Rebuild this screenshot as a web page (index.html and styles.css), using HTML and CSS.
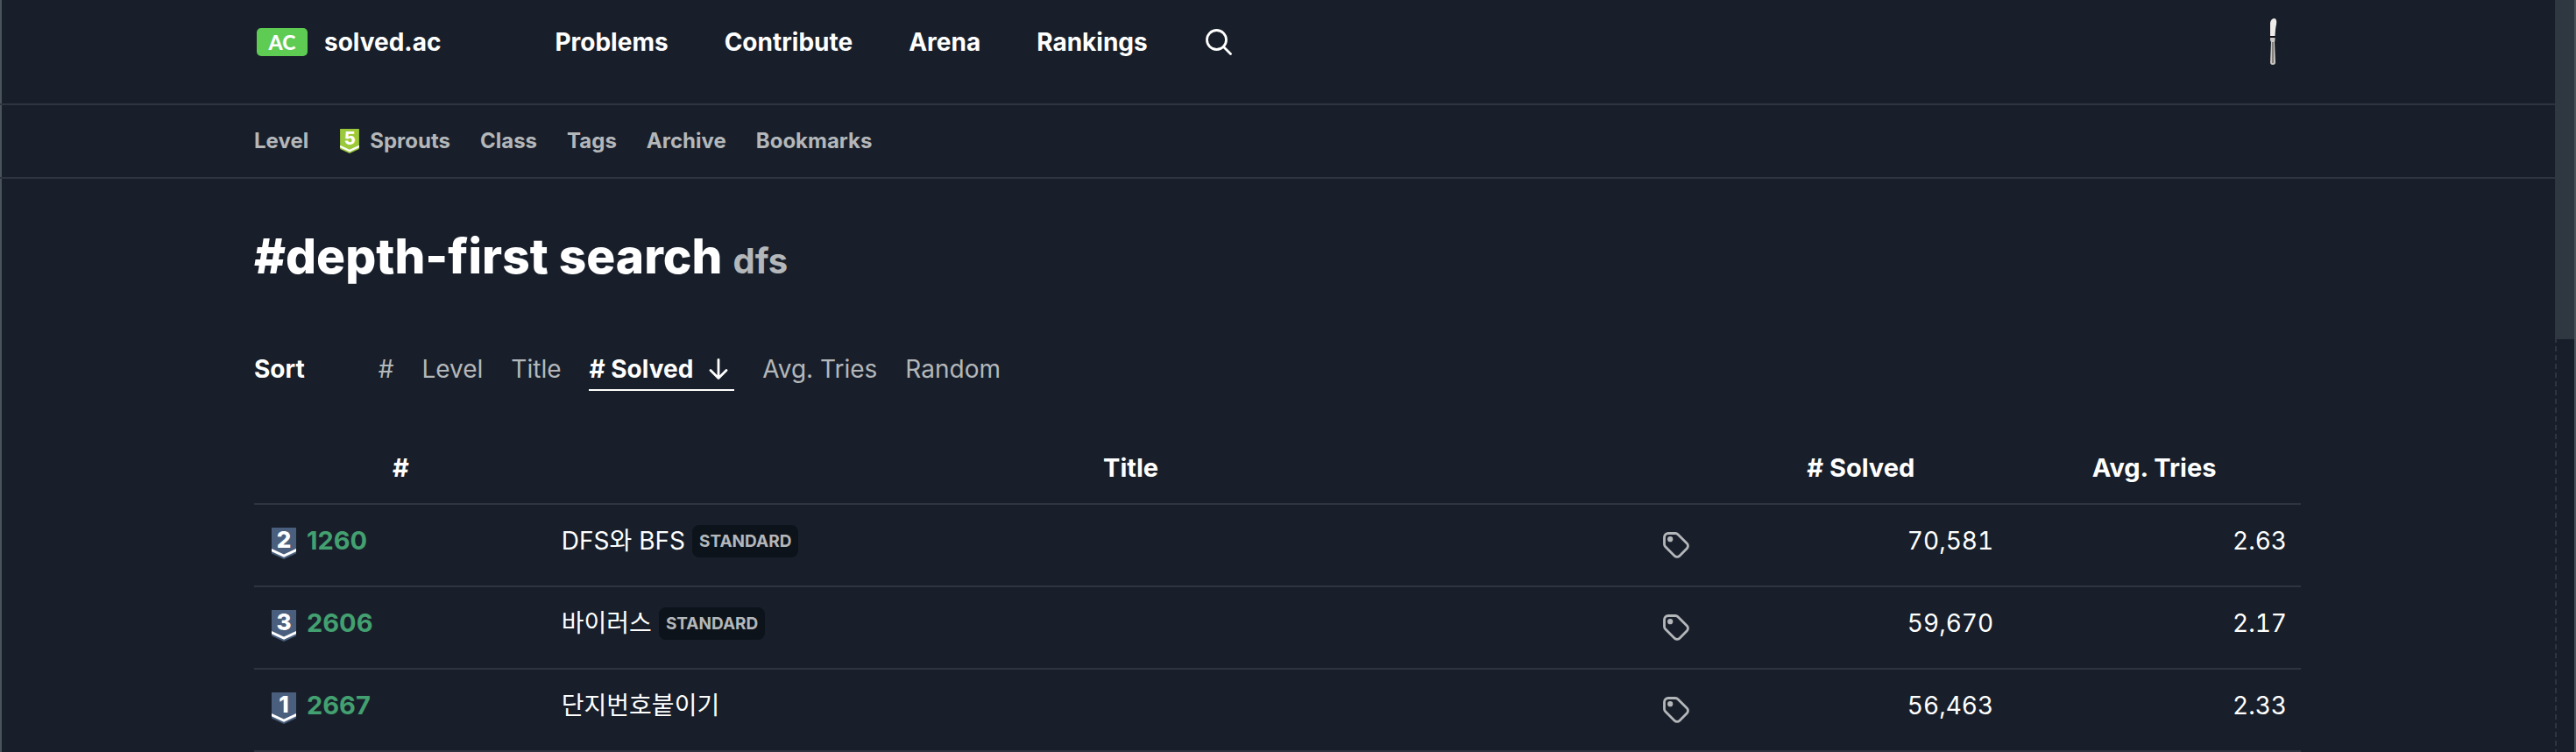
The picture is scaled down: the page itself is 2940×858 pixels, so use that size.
FILE: index.html
```html
<!DOCTYPE html>
<html lang="en">
<head>
<meta charset="utf-8">
<title>depth-first search - solved.ac</title>
<link rel="stylesheet" href="styles.css">
</head>
<body>
<svg class="defs" aria-hidden="true">
  <symbol id="tag" viewBox="0 0 30 30">
    <path d="M6 1.500h8.200a4 4 0 0 1 2.800 1.200L27.300 13a4 4 0 0 1 0 5.700l-8.400 8.500a4 4 0 0 1-5.700 0L2.700 16.800A4 4 0 0 1 1.500 14V6A4.500 4.500 0 0 1 6 1.500z" fill="none" stroke="currentColor" stroke-width="2.800"/>
    <circle cx="8.200" cy="8.200" r="3.100" fill="currentColor"/>
  </symbol>
  <symbol id="tier" viewBox="0 0 28 36">
    <path d="M0 0h28v29.500L14 36 0 29.500z" fill="currentColor"/>
    <path d="M0 24l14 6.500L28 24v3.300L14 33.800 0 27.300z" fill="#fff"/>
  </symbol>
</svg>
<div class="app">
  <div class="page">
    <header class="header">
      <div class="container header-row">
        <a class="brand" href="#"><span class="brand-mark">AC</span><span>solved.ac</span></a>
        <nav class="main-nav" aria-label="Main">
          <a href="#">Problems</a>
          <a href="#">Contribute</a>
          <a href="#">Arena</a>
          <a href="#">Rankings</a>
          <button class="icon-button" type="button" aria-label="Search">
            <svg class="search-icon" viewBox="0 0 30 30" aria-hidden="true"><circle cx="12.500" cy="12.500" r="11" fill="none" stroke="currentColor" stroke-width="2.800"/><path d="M20.500 20.500l8 8" stroke="currentColor" stroke-width="2.800" stroke-linecap="round"/></svg>
          </button>
        </nav>
        <button class="icon-button profile" type="button" aria-label="Profile">
          <svg class="knife" viewBox="0 0 10 54" aria-hidden="true">
            <path d="M1 20V5Q2 0 6 0q3 1 2 7-1 3-1.500 13z" fill="#efedea"/>
            <path d="M1 21h5.500" stroke="#090b0e" stroke-width="1.500"/>
            <path d="M1 22h5.500v3L6 27l1 24q-.5 2-3 2t-3-2l1-24-1-2z" fill="#c9c6c3"/>
            <path d="M4 27v24" stroke="#5e5955" stroke-width="1.300"/>
          </svg>
        </button>
      </div>
    </header>
    <nav class="sub-nav" aria-label="Problems">
      <div class="container sub-row">
        <a href="#">Level</a>
        <a class="sprouts" href="#"><span class="tier tier-small"><svg viewBox="0 0 28 36" aria-hidden="true"><use href="#tier"/></svg><span class="tier-label">5</span></span>Sprouts</a>
        <a href="#">Class</a>
        <a href="#">Tags</a>
        <a href="#">Archive</a>
        <a href="#">Bookmarks</a>
      </div>
    </nav>
    <main class="container">
      <h1>#depth-first search <small>dfs</small></h1>
      <div class="sort">
        <b class="sort-title">Sort</b>
        <a href="#">#</a>
        <a href="#">Level</a>
        <a href="#">Title</a>
        <a class="active" href="#" aria-current="true"># Solved <svg class="arrow" viewBox="0 0 22 24" aria-hidden="true"><path d="M11 1.500v20M2 13.500l9 9 9-9" fill="none" stroke="currentColor" stroke-width="2.800" stroke-linecap="round" stroke-linejoin="round"/></svg></a>
        <a href="#">Avg. Tries</a>
        <a href="#">Random</a>
      </div>
      <table>
        <thead>
          <tr><th scope="col">#</th><th class="col-title" scope="col">Title</th><th scope="col"># Solved</th><th scope="col">Avg. Tries</th></tr>
        </thead>
        <tbody>
          <tr>
            <td><div class="problem"><span class="tier"><svg viewBox="0 0 28 36" aria-hidden="true"><use href="#tier"/></svg><span class="tier-label">2</span></span><a class="solved" href="#">1260</a></div></td>
            <td><div class="title"><a href="#">DFS와 BFS</a><span class="label">STANDARD</span><button class="icon-button tag" type="button" aria-label="Show tags"><svg viewBox="0 0 30 30" aria-hidden="true"><use href="#tag"/></svg></button></div></td>
            <td class="number">70,581</td><td class="number">2.63</td>
          </tr>
          <tr>
            <td><div class="problem"><span class="tier"><svg viewBox="0 0 28 36" aria-hidden="true"><use href="#tier"/></svg><span class="tier-label">3</span></span><a class="solved" href="#">2606</a></div></td>
            <td><div class="title"><a href="#">바이러스</a><span class="label">STANDARD</span><button class="icon-button tag" type="button" aria-label="Show tags"><svg viewBox="0 0 30 30" aria-hidden="true"><use href="#tag"/></svg></button></div></td>
            <td class="number">59,670</td><td class="number">2.17</td>
          </tr>
          <tr>
            <td><div class="problem"><span class="tier"><svg viewBox="0 0 28 36" aria-hidden="true"><use href="#tier"/></svg><span class="tier-label">1</span></span><a class="solved" href="#">2667</a></div></td>
            <td><div class="title"><a href="#">단지번호붙이기</a><button class="icon-button tag" type="button" aria-label="Show tags"><svg viewBox="0 0 30 30" aria-hidden="true"><use href="#tag"/></svg></button></div></td>
            <td class="number">56,463</td><td class="number">2.33</td>
          </tr>
        </tbody>
      </table>
    </main>
  </div>
  <div class="scrollbar" aria-hidden="true"><div class="thumb"></div></div>
</div>
</body>
</html>
```
FILE: styles.css
```css
:root {
  --bg: #181f2a;
  --line: #2e3541;
  --edge: #4a5359;
  --text: #fff;
  --muted: #b4b7ba;
}
* { box-sizing: border-box; }
body {
  margin: 0;
  background: var(--bg);
  color: var(--text);
  font: 28px/44px Inter, "Noto Sans CJK KR", sans-serif;
}
a { color: inherit; text-decoration: none; }
.defs { display: none; }
.app {
  display: flex;
  height: 100vh;
  overflow: hidden;
  border-right: 2px solid var(--edge);
  box-shadow: inset 2px 0 var(--edge);
}
.page { flex: 1; min-width: 0; }
.container { width: 100%; max-width: 2400px; margin: 0 auto; padding: 0 32px; }
.icon-button {
  display: flex;
  padding: 0;
  border: 0;
  background: none;
  color: inherit;
}
.header { height: 120px; border-bottom: 2px solid var(--line); font-weight: 700; }
.header-row { display: flex; align-items: center; height: 96px; }
.brand { display: flex; align-items: center; gap: 19px; padding-left: 3px; }
.brand-mark {
  width: 58px;
  border-radius: 5px;
  background: #5ecb53;
  font: 900 23px/32px Lato, sans-serif;
  text-align: center;
}
.main-nav { display: flex; align-items: center; gap: 64px; margin-left: 130px; }
.search-icon { width: 30px; height: 30px; margin-left: 2px; }
.profile { margin-left: auto; margin-right: 26px; }
.knife { width: 10px; height: 54px; }
.sub-nav { border-bottom: 2px solid var(--line); color: var(--muted); font-size: 24px; font-weight: 700; }
.sub-row { display: flex; align-items: center; gap: 34px; height: 82px; }
.sprouts { display: flex; align-items: center; gap: 12px; padding-left: 2px; }
.tier { display: grid; width: 28px; height: 36px; color: #4a5f7e; }
.tier svg, .tier-label { grid-area: 1 / 1; }
.tier svg { width: 100%; height: 100%; }
.tier-label { color: #fff; font-size: 26px; line-height: 28px; font-weight: 800; text-align: center; }
.tier-small { width: 22px; height: 28px; color: #9bc93a; }
.tier-small .tier-label { font-size: 20px; line-height: 22px; }
h1 { margin: 0; padding-top: 48px; font-size: 55px; line-height: 80px; font-weight: 800; }
h1 small { color: var(--muted); font-size: 40px; line-height: 1; font-weight: 700; }
.sort { display: flex; gap: 32px; margin-top: 68px; color: var(--muted); line-height: 42px; }
.sort > * { padding-bottom: 2px; }
.sort-title { margin-right: 52px; color: var(--text); }
.sort .active { display: flex; align-items: center; padding-right: 7px; border-bottom: 2px solid var(--text); color: var(--text); font-weight: 700; }
.arrow { width: 22px; height: 24px; margin-left: 18px; }
table { width: 100%; margin-top: 48px; border-collapse: collapse; table-layout: fixed; }
.col-title { width: 57%; }
th { height: 81px; padding: 0 16px; font-size: 29px; }
td { height: 94px; padding: 0 16px 10px; }
tr { border-bottom: 2px solid var(--line); }
.problem, .title { display: flex; align-items: center; }
.problem { gap: 12px; padding-left: 4px; }
.problem .tier { margin-top: 6px; }
.solved { color: #43a070; font-size: 29px; font-weight: 700; }
.label { margin-left: 8px; padding: 0 8px; border-radius: 8px; background: #0c131a; color: var(--muted); font-size: 19px; line-height: 37px; font-weight: 700; }
.tag { margin: 10px 12px 0 auto; color: var(--muted); }
.tag svg { width: 30px; height: 30px; }
.number { text-align: right; font-variant-numeric: tabular-nums; }
.scrollbar {
  flex: none;
  width: 22px;
  background: repeating-linear-gradient(var(--line) 0 1px, transparent 1px 5px, var(--line) 5px 10px) 0 0 / 2px 100% no-repeat;
}
.thumb { height: 387px; background: #2f3740; }
```
